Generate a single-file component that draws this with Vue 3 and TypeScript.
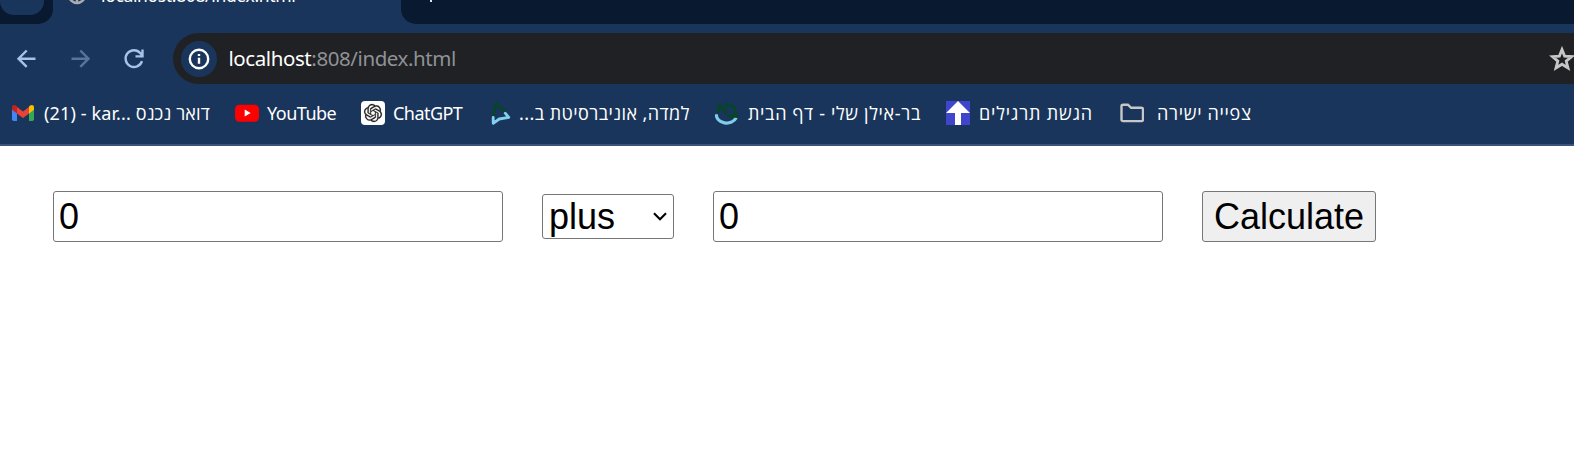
<script setup lang="ts">
import { ref } from 'vue'

interface Bookmark {
  id: string
  label: string
  dir: 'ltr' | 'rtl'
}

const bookmarks: Bookmark[] = [
  { id: 'gmail', label: '(21) - kar... דואר נכנס', dir: 'ltr' },
  { id: 'youtube', label: 'YouTube', dir: 'ltr' },
  { id: 'chatgpt', label: 'ChatGPT', dir: 'ltr' },
  { id: 'lemida', label: 'למדה, אוניברסיטת ב...', dir: 'rtl' },
  { id: 'barilan', label: 'בר-אילן שלי - דף הבית', dir: 'rtl' },
  { id: 'submit', label: 'הגשת תרגילים', dir: 'rtl' },
  { id: 'folder', label: 'צפייה ישירה', dir: 'rtl' },
]

const first = ref('0')
const second = ref('0')
const operation = ref('plus')

function calculate(): void {
  const a = Number(first.value)
  const b = Number(second.value)
  const results: Record<string, number> = { plus: a + b, minus: a - b }
  first.value = String(results[operation.value])
}
</script>

<template>
  <div class="window">
    <div class="tabs">
      <div class="tabs-left"><div class="tab-search"></div></div>
      <div class="tab">
        <svg class="globe" viewBox="0 0 20 20"><circle cx="10" cy="10" r="8" fill="none" stroke="#a9acb1" stroke-width="2.6" /><path d="M4 9l6 3v5" fill="none" stroke="#a9acb1" stroke-width="2.5" /></svg>
        <span class="tab-title">localhost:808/index.html</span>
      </div>
      <div class="tabs-right"><span class="new-tab"></span></div>
    </div>

    <div class="toolbar">
      <svg class="nav" viewBox="0 0 24 24"><path d="M20.5 11.7H3.5M11.7 3.5L3.5 11.7l8.2 8.2" /></svg>
      <svg class="nav dim" viewBox="0 0 24 24"><path d="M2.5 11.7h17M11.3 3.5l8.2 8.2-8.2 8.2" /></svg>
      <svg class="nav" viewBox="0 0 24 24"><path d="M20 14.2A8.4 8.4 0 1 1 18.4 6.2L20.5 8.6M20.5 2.6v6.8h-7" /></svg>
      <div class="address">
        <span class="info">
          <svg viewBox="0 0 22 22"><circle cx="11" cy="11" r="9.2" fill="none" stroke="#fff" stroke-width="2.4" /><path d="M11 9.8v6M11 6v2.1" stroke="#fff" stroke-width="2.4" /></svg>
        </span>
        <span class="url"><b>localhost</b>:808/index.html</span>
        <svg class="star" viewBox="0 0 26 26"><path d="M13 3.6l2.6 6.5 7 .5-5.4 4.5 1.8 6.8-6-3.7-6 3.7 1.8-6.8-5.4-4.5 7-.5z" fill="none" stroke="#c7c7c7" stroke-width="2.8" /></svg>
      </div>
    </div>

    <div class="bookmarks">
      <div v-for="b in bookmarks" :key="b.id" class="bookmark" :class="b.id">
        <svg class="icon" viewBox="0 0 24 24">
          <g v-if="b.id === 'gmail'">
            <path d="M1 7v11.3q0 1.7 1.7 1.7H6V10z" fill="#4285f4" />
            <path d="M18 10v10h3.3q1.7 0 1.7-1.7V7z" fill="#34a853" />
            <path d="M6 6v6.5l6 4.5 6-4.5V6l-6 4.6z" fill="#ea4335" />
            <path d="M1 6.2C1 4 3.3 3.4 4.8 4.5L6 5.5v7L1 8.8z" fill="#c5221f" />
            <path d="M23 6.2c0-2.2-2.3-2.8-3.8-1.7L18 5.5v7l5-3.7z" fill="#fbbc04" />
          </g>
          <g v-else-if="b.id === 'youtube'">
            <rect x="0" y="3.7" width="24" height="17" rx="4.5" fill="#f00" />
            <path d="M9.7 8.6v7l6-3.5z" fill="#fff" />
          </g>
          <g v-else-if="b.id === 'chatgpt'">
            <rect width="24" height="24" rx="4" fill="#fff" />
            <path transform="translate(3 3) scale(.75)" fill="#222" stroke="#222" stroke-width=".3" d="M22.28 9.82a5.98 5.98 0 0 0-.52-4.91 6.05 6.05 0 0 0-6.51-2.9A6.07 6.07 0 0 0 4.98 4.18a5.98 5.98 0 0 0-4 2.9 6.05 6.05 0 0 0 .75 7.1 5.98 5.98 0 0 0 .51 4.91 6.05 6.05 0 0 0 6.51 2.9A5.98 5.98 0 0 0 13.26 24a6.06 6.06 0 0 0 5.77-4.21 5.99 5.99 0 0 0 4-2.9 6.06 6.06 0 0 0-.75-7.07zM13.26 22.43a4.48 4.48 0 0 1-2.88-1.04l.14-.08 4.78-2.76a.8.8 0 0 0 .39-.68v-6.74l2.02 1.17a.07.07 0 0 1 .04.05v5.58a4.5 4.5 0 0 1-4.49 4.5zM3.6 18.3a4.47 4.47 0 0 1-.54-3.01l.14.08 4.78 2.76a.77.77 0 0 0 .78 0l5.84-3.37v2.33a.08.08 0 0 1-.03.06L9.74 19.95A4.5 4.5 0 0 1 3.6 18.3zM2.34 7.9a4.49 4.49 0 0 1 2.37-1.98v5.68a.77.77 0 0 0 .39.68l5.81 3.35-2.02 1.17a.08.08 0 0 1-.07 0L4 14.01A4.5 4.5 0 0 1 2.34 7.9zm16.6 3.86l-5.84-3.39 2.02-1.16a.08.08 0 0 1 .07 0l4.83 2.79a4.49 4.49 0 0 1-.68 8.1v-5.68a.79.79 0 0 0-.4-.66zm2.01-3.02l-.14-.09-4.77-2.78a.78.78 0 0 0-.79 0L9.41 9.23V6.9a.07.07 0 0 1 .03-.06l4.83-2.79a4.5 4.5 0 0 1 6.68 4.69zM8.31 12.86l-2.02-1.16a.08.08 0 0 1-.04-.06V6.07a4.5 4.5 0 0 1 7.38-3.45l-.14.08-4.78 2.76a.8.8 0 0 0-.39.68zm1.1-2.36l2.6-1.5 2.6 1.5v3l-2.6 1.5-2.6-1.5z" fill-rule="evenodd" />
          </g>
          <g v-else-if="b.id === 'lemida'" fill="none" stroke-width="2.8" stroke-linejoin="round" stroke-linecap="round">
            <path d="M2.4 14L4.9 2.2 13.5 10.5" stroke="#064529" />
            <path d="M2.2 16.5v5.8l6-4.3 9.6-1.6-3.6-4.2" stroke="#80d1ed" />
          </g>
          <g v-else-if="b.id === 'barilan'" fill="none">
            <path d="M1.2 13.2a10.5 9 0 0 0 20 3.6" stroke="#80cdea" stroke-width="3.3" />
            <path d="M3.5 3l8.5 9.5M12.8 1.2l-2.3 6M5.3 5.5l-3 5.9M14.5 5.2c5-.7 6.3 3 5.6 9.5M12 15.3H23.5" stroke="#064529" stroke-width="3.1" />
          </g>
          <g v-else-if="b.id === 'submit'">
            <rect width="24" height="24" fill="#4046cc" />
            <path d="M12 0l12 12h-9v12H9V12H0z" fill="#fff" />
          </g>
          <path v-else d="M1.5 18.5V5.3q0-1.6 1.6-1.6h4.8l3.2 3.1h10.3Q23 6.8 23 8.4v10.1q0 1.6-1.6 1.6H3.1q-1.6 0-1.6-1.6z" fill="none" stroke="#c7c7c7" stroke-width="2.4" />
        </svg>
        <span class="label" :dir="b.dir">{{ b.label }}</span>
      </div>
    </div>

    <form class="calculator" @submit.prevent="calculate">
      <input v-model="first" class="number" type="text" />
      <div class="select-box">
        <select v-model="operation">
          <option>plus</option>
          <option>minus</option>
        </select>
        <svg viewBox="0 0 14 9"><path d="M1 1.2l6 6 6-6" fill="none" stroke="#000" stroke-width="2.1" /></svg>
      </div>
      <input v-model="second" class="number" type="text" />
      <button type="submit">Calculate</button>
    </form>
  </div>
</template>

<style>
body {
  margin: 0;
  background: #fff;
}
</style>

<style scoped>
.window {
  width: 1574px;
  height: 470px;
  overflow: hidden;
  background: #fff;
  font-family: "Noto Sans", "Open Sans", "DejaVu Sans", sans-serif;
}
.tabs {
  display: flex;
  height: 24px;
  overflow: hidden;
  background: #1a355b;
}
.tabs-left {
  width: 53px;
  background: #091930;
  border-bottom-right-radius: 15px;
}
.tab-search {
  width: 44px;
  height: 15px;
  background: #1a355b;
  border-radius: 0 0 14px 14px;
}
.tab {
  display: flex;
  align-items: flex-start;
  width: 348px;
}
.globe {
  width: 20px;
  height: 20px;
  margin: -15px 14px 0 14px;
}
.tab-title {
  height: 24px;
  margin-top: -17px;
  color: #fff;
  font-size: 17.5px;
  line-height: 24px;
  letter-spacing: -0.35px;
  white-space: nowrap;
}
.tabs-right {
  flex: 1;
  background: #091930;
  border-bottom-left-radius: 15px;
}
.new-tab {
  display: block;
  width: 2px;
  height: 2px;
  margin-left: 29px;
  background: #dce3ec;
}
.toolbar {
  display: flex;
  align-items: center;
  height: 60px;
  padding: 9px 0 0 15px;
  box-sizing: border-box;
  background: #1a355b;
}
.nav {
  flex: none;
  width: 24px;
  height: 24px;
  margin-right: 29.5px;
  fill: none;
  stroke: #a8c1e6;
  stroke-width: 2.4;
}
.nav.dim {
  stroke: #59739a;
}
.address {
  display: flex;
  align-items: center;
  flex: 1;
  height: 51px;
  margin-left: -3px;
  border-radius: 26px 0 0 26px;
  background: #202124;
}
.info {
  display: flex;
  align-items: center;
  justify-content: center;
  width: 36px;
  height: 36px;
  margin-left: 8px;
  border-radius: 50%;
  background: #1a355b;
}
.info svg {
  width: 22px;
  height: 22px;
}
.url {
  margin: 0 0 2px 12px;
  color: #8f9296;
  font-size: 20.5px;
  letter-spacing: -0.42px;
  white-space: nowrap;
}
.url b {
  color: #fff;
  font-weight: 400;
}
.star {
  width: 26px;
  height: 26px;
  margin: 0 -1px 0 auto;
}
.bookmarks {
  display: flex;
  align-items: center;
  height: 62px;
  padding: 0 0 2px 11px;
  box-sizing: border-box;
  border-bottom: 2px solid #3a5378;
  background: #1a355b;
}
.bookmark {
  display: flex;
  align-items: center;
  flex: none;
  gap: 9px;
}
.icon {
  flex: none;
  width: 24px;
  height: 24px;
}
.label {
  color: #fff;
  font-size: 18px;
  line-height: 26px;
  white-space: nowrap;
  unicode-bidi: isolate;
}
.gmail { width: 224px; letter-spacing: 0.13px; }
.youtube { width: 126px; gap: 8px; letter-spacing: -0.5px; }
.chatgpt { width: 130px; gap: 8px; letter-spacing: -0.55px; }
.lemida { width: 224px; gap: 4px; letter-spacing: 0.43px; }
.barilan { width: 231px; letter-spacing: 0.66px; }
.submit { width: 174px; letter-spacing: 0.85px; }
.folder { gap: 13px; letter-spacing: 0.7px; }
.calculator {
  display: flex;
  align-items: center;
  gap: 39px;
  padding: 45px 0 0 53px;
}
.calculator input,
.calculator select,
.calculator button {
  margin: 0;
  box-sizing: border-box;
  border: 1px solid #767676;
  border-radius: 3px;
  outline: 0;
  color: #000;
  font-family: "Liberation Sans", Arial, sans-serif;
  font-size: 36px;
}
.number {
  width: 450px;
  height: 51px;
  padding: 0 5px;
  background: #fff;
}
.select-box {
  display: grid;
  align-items: center;
  width: 132px;
}
.select-box > * {
  grid-area: 1 / 1;
}
.calculator select {
  width: 132px;
  height: 45px;
  padding: 0 0 0 6px;
  appearance: none;
  background: #fff;
}
.select-box svg {
  width: 14px;
  height: 9px;
  margin-right: 7px;
  justify-self: end;
  pointer-events: none;
}
.calculator button {
  width: 174px;
  height: 51px;
  padding: 0;
  background: #efefef;
}
</style>
